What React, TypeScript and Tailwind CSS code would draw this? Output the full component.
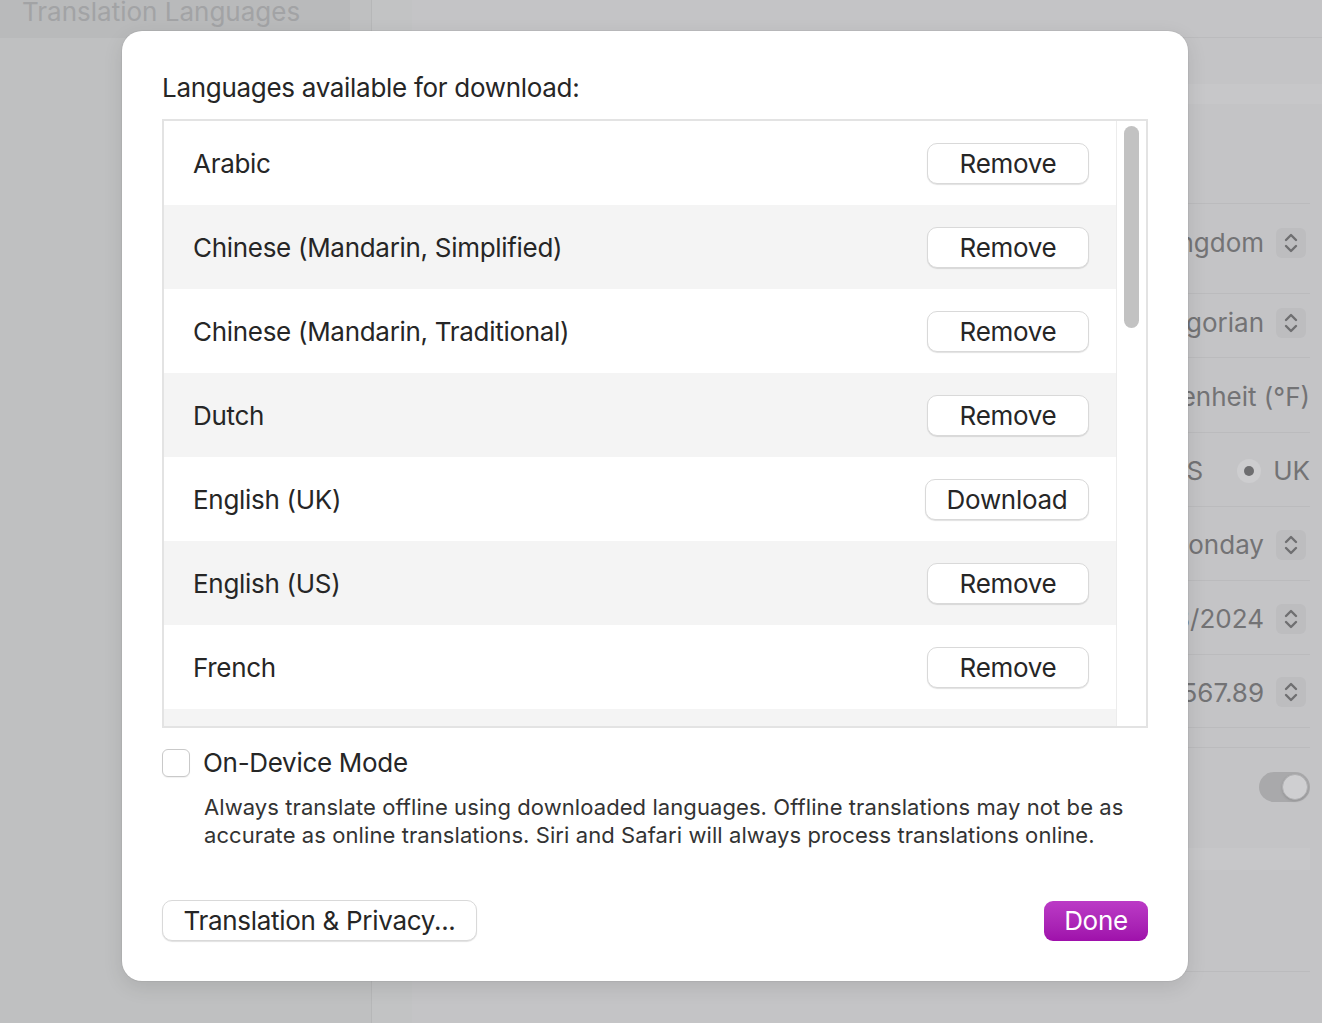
import React from "react"

const languages = [
  { name: "Arabic", action: "Remove" },
  { name: "Chinese (Mandarin, Simplified)", action: "Remove" },
  { name: "Chinese (Mandarin, Traditional)", action: "Remove" },
  { name: "Dutch", action: "Remove" },
  { name: "English (UK)", action: "Download" },
  { name: "English (US)", action: "Remove" },
  { name: "French", action: "Remove" },
]

function Stepper() {
  return (
    <div className="ml-3 mr-[4px] flex h-[30px] w-[30px] items-center justify-center rounded-md bg-[#bdbdbf]">
      <svg width="14" height="22" viewBox="0 0 14 22" fill="none" stroke="#6f6f71" strokeWidth="2.4" strokeLinecap="round" strokeLinejoin="round">
        <path d="M2 8 L7 3 L12 8" />
        <path d="M2 14 L7 19 L12 14" />
      </svg>
    </div>
  )
}

function SettingRow({ value, stepper = true, h }: { value: React.ReactNode; stepper?: boolean; h: string }) {
  return (
    <div className={`flex items-center justify-end border-b border-[#bbbbbd] ${h}`}>
      {value}
      {stepper && <Stepper />}
    </div>
  )
}

function Background() {
  return (
    <div className="flex h-[1023px] w-[1322px] text-[26px] text-[#737375]">
      <div className="w-[371px] shrink-0 bg-[#bfc0c1]">
        <div className="h-[38px] w-[350px] overflow-hidden bg-[#b9babb] pl-[22px] leading-[24px] text-[#a2a3a5]">Translation Languages</div>
      </div>
      <div className="w-[41px] shrink-0 border-l border-[#b6b7b8] bg-[#c2c3c4]" />
      <div className="flex flex-1 flex-col bg-[#c4c4c6]">
        <div className="h-[38px] border-b border-[#bbbbbd]" />
        <div className="mt-[46px] h-[20px] bg-[#c7c7c9]" />
        <div className="mr-[12px] flex flex-col pl-[20px]">
          <div className="h-[100px] border-b border-[#bbbbbd]" />
          <SettingRow h="h-[90px] pb-[12px]" value="United Kingdom" />
          <SettingRow h="h-[64px] pb-[6px]" value="Gregorian" />
          <SettingRow h="h-[75px] pt-[2px]" value="Fahrenheit (°F)" stepper={false} />
          <SettingRow
            h="h-[74px] pt-[2px]"
            stepper={false}
            value={
              <div className="flex items-center">
                <span>Metric</span>
                <span className="ml-8 mr-[10px] h-[24px] w-[24px] rounded-full border border-[#b9b9bb] bg-[#c9c9cb]" />
                <span>US</span>
                <span className="ml-[34px] mr-[12px] flex h-[24px] w-[24px] items-center justify-center rounded-full bg-[#cdcdcf]">
                  <span className="h-[10px] w-[10px] rounded-full bg-[#6d6d6f]" />
                </span>
                <span>UK</span>
              </div>
            }
          />
          <SettingRow h="h-[74px] pt-[2px]" value="Monday" />
          <SettingRow h="h-[74px] pt-[2px]" value="19/08/2024" />
          <SettingRow h="h-[73px] pt-[2px]" value="1,234,567.89" />
          <div className="h-[20px] border-b border-[#bbbbbd]" />
          <div className="flex h-[100px] items-center justify-end pb-[22px]">
            <div className="flex h-[30px] w-[51px] items-center justify-end rounded-full bg-[#a9a9ab] px-[2px]">
              <span className="h-[26px] w-[26px] rounded-full border border-[#b0b0b2] bg-[#cfcfd1] shadow" />
            </div>
          </div>
          <div className="h-[22px] bg-[#c7c7c9]" />
          <div className="h-[102px] border-b border-[#bbbbbd]" />
        </div>
      </div>
    </div>
  )
}

function MacButton({ children, className = "" }: { children: React.ReactNode; className?: string }) {
  return (
    <button className={`flex h-[41px] items-center justify-center rounded-[10px] border border-[#d9d9d9] bg-white text-[26px] tracking-[-0.3px] text-[#262626] shadow-[0_1px_1px_rgba(0,0,0,0.12)] ${className}`}>
      {children}
    </button>
  )
}

export default function App() {
  return (
    <div className="relative h-[1023px] w-[1322px] overflow-hidden" style={{ fontFamily: "Inter, 'Noto Sans', sans-serif" }}>
      <Background />
      <div className="absolute left-[122px] top-[31px] flex h-[950px] w-[1066px] flex-col rounded-[20px] bg-white px-[40px] pt-[40px] text-[#262626] shadow-[0_0_0_1px_rgba(0,0,0,0.04),0_6px_20px_rgba(0,0,0,0.1)]">
        <div className="text-[26px] leading-[34px] tracking-[-0.3px]">Languages available for download:</div>
        <div className="mt-[14px] flex h-[609px] overflow-hidden border-2 border-[#e3e3e3]">
          <div className="flex flex-1 flex-col">
            {languages.map((l, i) => (
              <div key={l.name} className={`flex h-[84px] shrink-0 items-center justify-between pl-[29px] pr-[27px] text-[26px] tracking-[-0.3px] ${i % 2 === 0 ? "bg-white" : "bg-[#f4f4f4]"}`}>
                <span>{l.name}</span>
                <MacButton className={l.action === "Download" ? "w-[164px]" : "w-[162px]"}>{l.action}</MacButton>
              </div>
            ))}
            <div className="flex-1 bg-[#f4f4f4]" />
          </div>
          <div className="w-[30px] shrink-0 border-l border-[#ececec] bg-white pl-[7px] pt-[5px]">
            <div className="h-[202px] w-[15px] rounded-full bg-[#c2c2c2]" />
          </div>
        </div>
        <div className="mt-[19px] flex items-center">
          <div className="h-[28px] w-[28px] rounded-[6px] border border-[#c9c9c9] bg-white shadow-[0_1px_1px_rgba(0,0,0,0.06)]" />
          <span className="ml-[13px] text-[26px] leading-[32px] tracking-[-0.3px]">On-Device Mode</span>
        </div>
        <p className="mt-[14px] pl-[42px] text-[22px] leading-[28px] tracking-[0.08px] text-[#333]">
          Always translate offline using downloaded languages. Offline translations may not be as accurate as online translations. Siri and Safari will always process translations online.
        </p>
        <div className="mt-[51px] flex items-center justify-between">
          <MacButton className="w-[315px]">Translation &amp; Privacy...</MacButton>
          <button className="flex h-[40px] w-[104px] items-center justify-center rounded-[9px] bg-gradient-to-b from-[#bb3ac6] to-[#9f10ab] text-[26px] tracking-[-0.3px] text-white">Done</button>
        </div>
      </div>
    </div>
  )
}
